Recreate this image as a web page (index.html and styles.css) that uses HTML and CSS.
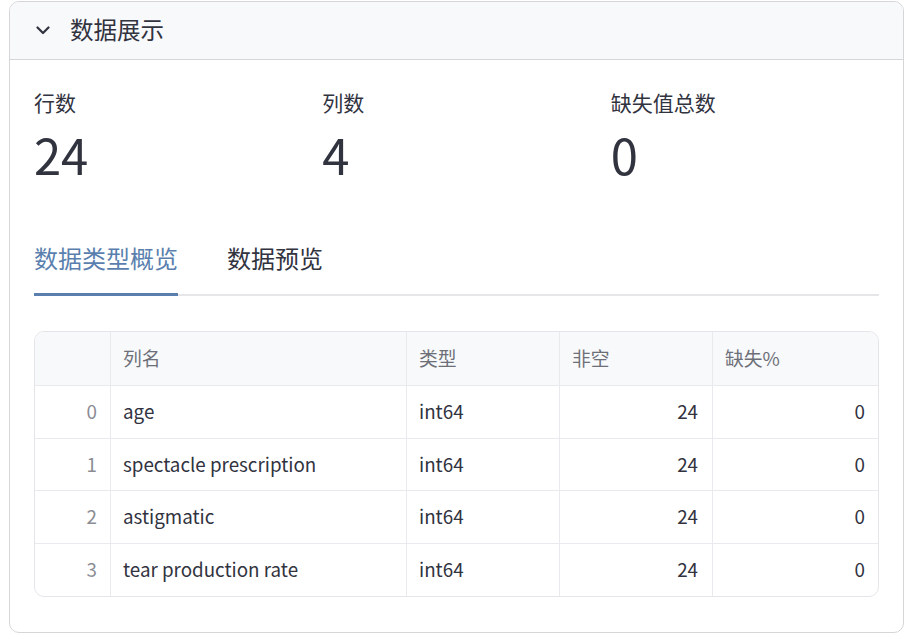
FILE: index.html
```html
<!DOCTYPE html>
<html lang="zh">
<head>
<meta charset="utf-8">
<link rel="stylesheet" href="styles.css">
</head>
<body>
<div class="expander">
  <div class="exp-header">
    <svg class="chev" width="14" height="9" viewBox="0 0 14 9"><polyline points="1.5,1.5 7,7 12.5,1.5" fill="none" stroke="#31333F" stroke-width="2.2" stroke-linecap="round" stroke-linejoin="round"/></svg>
    <span class="exp-title">数据展示</span>
  </div>
  <div class="exp-body">
    <div class="metrics">
      <div class="metric"><div class="m-label">行数</div><div class="m-value">24</div></div>
      <div class="metric"><div class="m-label">列数</div><div class="m-value">4</div></div>
      <div class="metric"><div class="m-label">缺失值总数</div><div class="m-value">0</div></div>
    </div>
    <div class="tabs">
      <div class="tab active">数据类型概览</div>
      <div class="tab">数据预览</div>
    </div>
    <div class="df">
      <div class="c h"></div><div class="c h">列名</div><div class="c h">类型</div><div class="c h">非空</div><div class="c h last">缺失%</div>
      <div class="c idx">0</div><div class="c">age</div><div class="c">int64</div><div class="c num">24</div><div class="c num last">0</div>
      <div class="c idx">1</div><div class="c">spectacle prescription</div><div class="c">int64</div><div class="c num">24</div><div class="c num last">0</div>
      <div class="c idx">2</div><div class="c">astigmatic</div><div class="c">int64</div><div class="c num">24</div><div class="c num last">0</div>
      <div class="c idx b">3</div><div class="c b">tear production rate</div><div class="c b">int64</div><div class="c num b">24</div><div class="c num last b">0</div>
    </div>
  </div>
</div>
</body>
</html>
```
FILE: styles.css
```css
* { box-sizing: border-box; }
body {
  margin: 0;
  background: #ffffff;
  font-family: "Noto Sans CJK SC", "Noto Sans", sans-serif;
  color: #31333F;
}
.expander {
  margin: 1px 0 0 9px;
  width: 895px;
  height: 632px;
  border: 1px solid #d6d6d9;
  border-radius: 10px;
  overflow: hidden;
}
.exp-header {
  height: 58px;
  background: #f8f9fb;
  border-bottom: 1px solid #d6d6d9;
  display: flex;
  align-items: center;
  padding: 0 0 3px 26px;
}
.chev { margin-right: 20px; margin-top: 2px; }
.exp-title { font-size: 23.5px; line-height: 30px; }
.exp-body { padding: 27px 24px 0 24px; }
.metrics {
  display: grid;
  grid-template-columns: repeat(3, 1fr);
  column-gap: 20px;
}
.m-label { font-size: 21px; line-height: 30px; height: 30px; }
.m-value { font-size: 49px; line-height: 66px; margin-top: 4px; letter-spacing: -0.3px; }
.tabs {
  display: flex;
  gap: 49px;
  margin-top: 51px;
  border-bottom: 2px solid #e6e6e9;
}
.tab {
  font-size: 24px;
  line-height: 40px;
  padding-bottom: 15px;
  margin-bottom: -2px;
  border-bottom: 3px solid transparent;
}
.tab.active { color: #5a7fae; border-bottom-color: #5a7fae; }
.df {
  margin-top: 35px;
  width: 845px;
  border: 1px solid #e4e5e9;
  border-radius: 10px;
  overflow: hidden;
  display: grid;
  grid-template-columns: 76px 296px 153px 153px 165px;
  grid-template-rows: 54px 53px 52px 53px 52px;
  font-size: 18.8px;
}
.c {
  border-right: 1px solid #e9eaed;
  border-bottom: 1px solid #e9eaed;
  padding: 0 13px 3px 12px;
  display: flex;
  align-items: center;
  white-space: nowrap;
  color: #31333F;
}
.c.last { border-right: none; }
.c.b { border-bottom: none; }
.c.h { background: #f8f9fb; color: #6d6f78; }
.c.idx { justify-content: flex-end; color: #8b8c94; }
.c.num { justify-content: flex-end; padding-right: 14px; }
.c.num.last { padding-right: 13px; }
```
